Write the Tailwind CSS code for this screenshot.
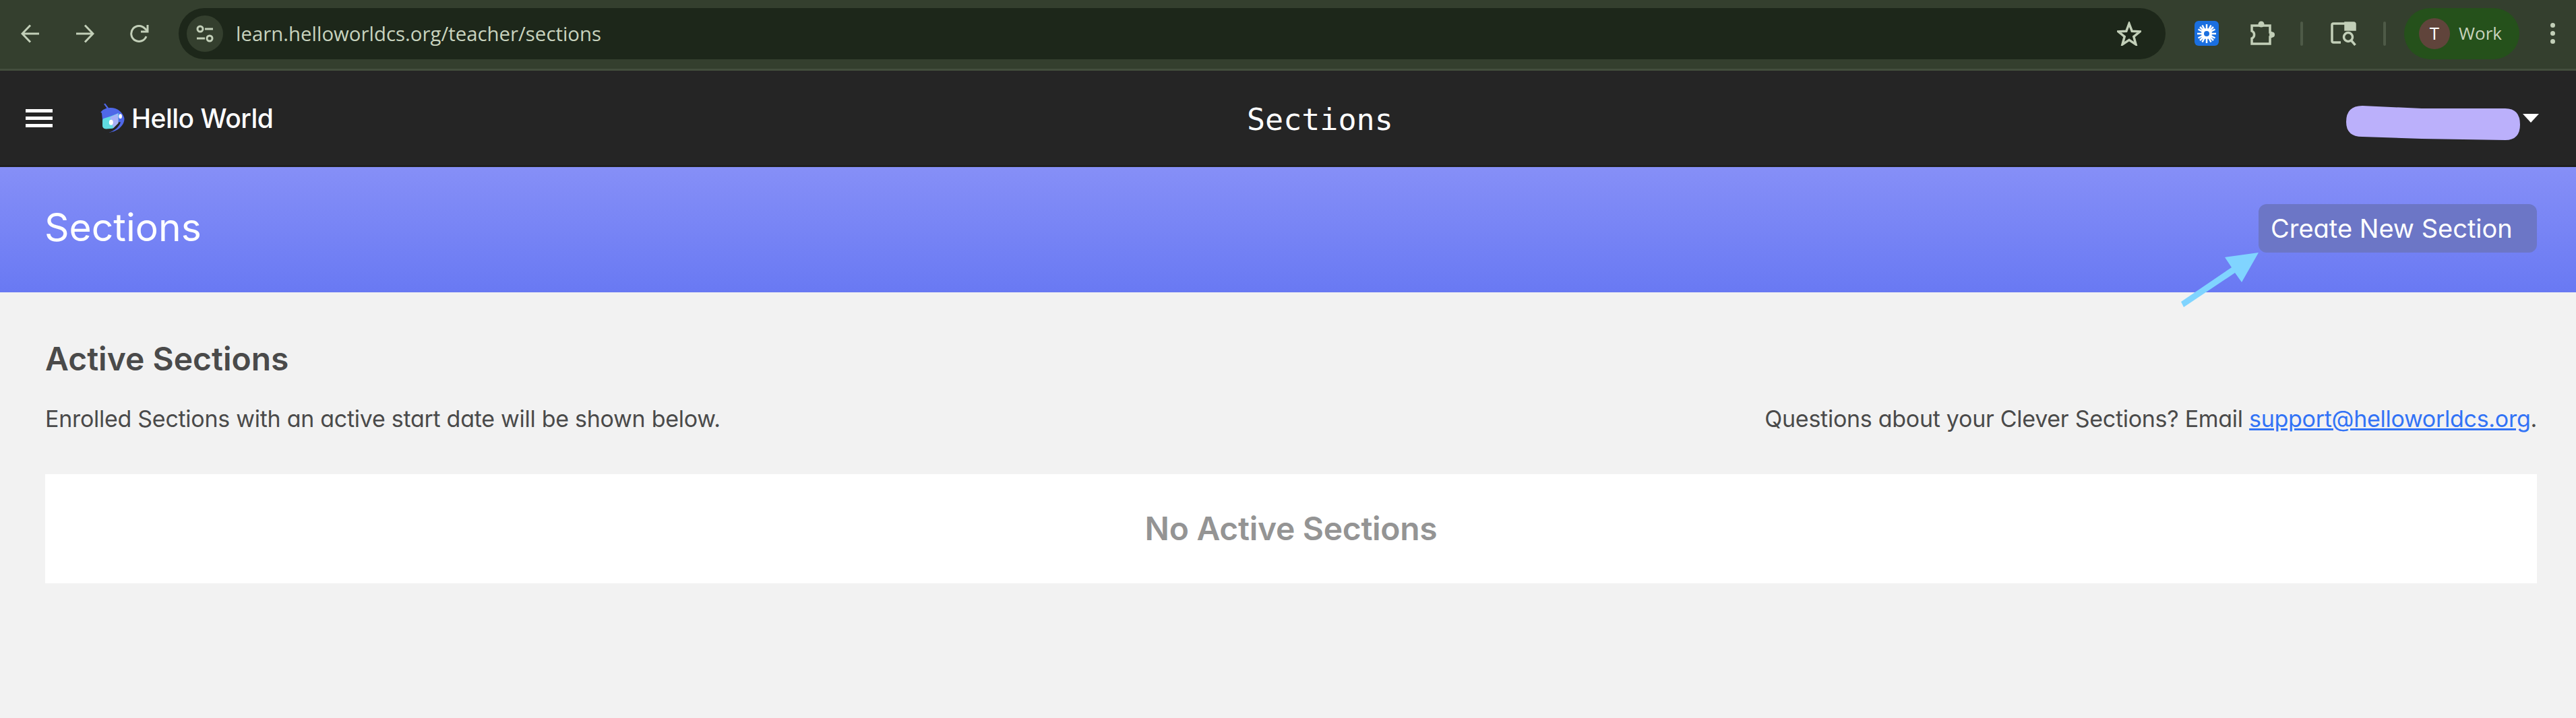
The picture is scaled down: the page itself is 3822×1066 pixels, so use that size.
<!DOCTYPE html>
<html lang="en">
<head>
  <meta charset="UTF-8" />
  <title>Sections</title>
  <script src="https://cdn.jsdelivr.net/npm/@tailwindcss/browser@4"></script>
</head>
<body class="bg-[#f2f2f2] font-['Inter',sans-serif] [font-feature-settings:'cv11'] overflow-hidden">
  <div class="relative w-[3822px] h-[1066px]">

    <!-- browser toolbar -->
    <div class="flex items-center h-[105px] pb-[3px] bg-[#343f2e] border-b-[3px] border-[#434e3d] text-[#c2cfb8]">
      <div class="flex items-center gap-[53px] pl-[31px] w-[265px]">
        <svg class="w-[28px] h-[28px]" viewBox="0 0 28 28" fill="none" stroke="currentColor" stroke-width="3"><path d="M27 14H3M14 1.500 2 14l12 12.500"/></svg>
        <svg class="w-[28px] h-[28px]" viewBox="0 0 28 28" fill="none" stroke="currentColor" stroke-width="3"><path d="M1 14h24M14 1.500 26 14 14 26.500"/></svg>
        <svg class="w-[28px] h-[28px]" viewBox="0 0 28 28" fill="none" stroke="currentColor" stroke-width="3"><path d="M24 18a11.500 11.500 0 1 1-2-11.500L26 10"/><path d="M26 1v10H16" /></svg>
      </div>
      <div class="flex items-center justify-between basis-[2948px] h-[76px] rounded-full bg-[#1d271a] pl-[12px] pr-[36px]">
        <div class="flex items-center gap-[19px]">
          <div class="flex items-center justify-center w-[54px] h-[54px] rounded-full bg-[#343f2e]">
            <svg class="w-[28px] h-[28px]" viewBox="0 0 28 28" fill="none" stroke="currentColor" stroke-width="3"><circle cx="7" cy="7" r="4"/><path d="M14 7h12M2 21h12"/><circle cx="21" cy="21" r="4"/></svg>
          </div>
          <span class="mt-[2px] font-['Open_Sans',sans-serif] text-[29.4px] leading-none text-[#c8d3be] [font-feature-settings:normal]">learn.helloworldcs.org/teacher/sections</span>
        </div>
        <svg class="w-[36px] h-[36px]" viewBox="0 0 36 36" fill="none" stroke="currentColor" stroke-width="3.500"><path d="M18 3l4.200 11.200 12 .6-9.400 7.500 3.200 11.700L18 27.300 8 34l3.200-11.700L1.800 14.800l12-.6z"/></svg>
      </div>
      <div class="flex items-center ml-[43px] h-[76px]">
        <div class="flex items-center justify-center w-[36px] h-[37px] rounded-[6px] bg-[#1a6fe0]">
          <svg class="w-[30px] h-[30px]" viewBox="0 0 30 30" fill="none" stroke="#fff" stroke-width="2.500">
            <path d="M15 1v28M1 15h28M5 5l20 20M25 5 5 25M8.500 2.500l13 25M21.500 2.500l-13 25M2.500 8.500l25 13M27.500 8.500l-25 13"/>
            <circle cx="15" cy="15" r="8" fill="#fff" stroke="none"/>
            <circle cx="15" cy="15" r="4" fill="#1a6fe0" stroke="none"/>
          </svg>
        </div>
        <svg class="ml-[46px] w-[37px] h-[37px]" viewBox="0 0 37 37" fill="none" stroke="currentColor" stroke-width="3.500">
          <path d="M3 7h27v10a3 3 0 0 1 0 7v10H3v-8a6 6 0 0 0 0-11z"/>
          <circle cx="17" cy="5" r="4.500" fill="currentColor" stroke="none"/>
          <circle cx="33" cy="20.500" r="4" fill="currentColor" stroke="none"/>
        </svg>
        <div class="ml-[38px] w-[4px] h-[36px] rounded-full bg-[#4e5a47]"></div>
        <svg class="ml-[41px] w-[40px] h-[36px]" viewBox="0 0 40 36" fill="none" stroke="currentColor" stroke-width="3.500"><path d="M15 31H4a2 2 0 0 1-2-2V5a2 2 0 0 1 2-2h18"/><path d="M22 2h12a2 2 0 0 1 2 2v8H22z" fill="currentColor"/><circle cx="26" cy="23" r="6.500"/><path d="M30.500 28l6 7"/></svg>
        <div class="ml-[38px] w-[4px] h-[36px] rounded-full bg-[#4e5a47]"></div>
        <div class="flex items-center ml-[27px] w-[171px] h-[76px] rounded-full bg-[#25511b] pl-[22px]">
          <div class="flex items-center justify-center w-[46px] h-[46px] rounded-full bg-[#60443b] text-[26px] text-white font-['Open_Sans',sans-serif]">T</div>
          <span class="ml-[13px] text-[26px] font-['Open_Sans',sans-serif] text-[#c8d3be] [font-feature-settings:normal]">Work</span>
        </div>
        <div class="flex flex-col gap-[5px] ml-[46px]">
          <div class="w-[7px] h-[7px] rounded-full bg-current"></div>
          <div class="w-[7px] h-[7px] rounded-full bg-current"></div>
          <div class="w-[7px] h-[7px] rounded-full bg-current"></div>
        </div>
      </div>
    </div>

    <!-- site header -->
    <header class="relative flex items-center justify-between h-[143px] bg-[#252525] border-b-[3px] border-[#1f1f1f] text-white">
      <div class="flex items-center">
        <div class="flex flex-col gap-[6px] ml-[38px] w-[40px]">
          <div class="h-[5px] bg-white"></div>
          <div class="h-[5px] bg-white"></div>
          <div class="h-[5px] bg-white"></div>
        </div>
        <svg class="ml-[71px] w-[36px] h-[44px]" viewBox="88 68 107 130">
          <path d="M88 110c6-10 16-16 28-20L103 72l6-3 15 20c30-5 60 12 69 44 4 28-24 60-68 65 26-9 46-26 52-46l-80-10-3-30c-2-3-4-3-6-2z" fill="#4f68e8"/>
          <path d="M128 128l40-16-2 44-24 24-30 2c-8 0-15-6-15-14v-24c0-4 3-8 7-9z" fill="#5fdce2"/>
          <path d="M130 130l35-16 2 42-22 22z" fill="#a7b1f7"/>
          <ellipse cx="135" cy="153" rx="9" ry="12" fill="#fff"/>
          <ellipse cx="176" cy="126" rx="7" ry="10" fill="#fff"/>
        </svg>
        <span class="ml-[10px] text-[39px] font-medium tracking-[-0.5px] leading-none [font-feature-settings:normal]">Hello World</span>
      </div>
      <div class="absolute left-[1850px] top-[50px] font-['DejaVu_Sans_Mono',monospace] text-[45px] leading-none [font-feature-settings:normal]">Sections</div>
      <div class="flex items-center pr-[55px]">
        <svg class="w-[258px] h-[51px] mt-[15px]" viewBox="0 0 258 51"><path d="M24 0 112 4h124q22 0 22 24 0 23-22 23l-124-2-88-3Q0 46 0 24 0 0 24 0z" fill="#bbb0fb"/></svg>
        <div class="ml-[4px] w-0 h-0 border-x-[12px] border-t-[13px] border-x-transparent border-t-white"></div>
      </div>
    </header>

    <!-- page title band -->
    <section class="flex items-center justify-between h-[186px] px-[58px] pl-[66px] bg-gradient-to-b from-[#868ff7] to-[#6979f3]">
      <h1 class="mb-[8px] text-[57px] text-white leading-none">Sections</h1>
      <button class="flex items-center mb-[4px] h-[72px] w-[413px] pl-[18px] rounded-[12px] bg-[#6c76c6] text-[38px] text-white">Create New Section</button>
    </section>

    <!-- arrow annotation -->
    <svg class="absolute left-[3230px] top-[370px] w-[125px] h-[90px]" viewBox="3230 370 125 90">
      <path d="M3351 375 3301 382 3311 397 3236 448 3240 456 3316 405 3326 419z" fill="#80d4ff"/>
    </svg>

    <main class="px-[58px] pl-[67px]">
      <h2 class="mt-[75px] text-[48px] font-semibold leading-[48px] text-[#4a4a4a]">Active Sections</h2>
      <div class="flex justify-between mt-[43px] text-[34px] tracking-[-0.28px] leading-[44px] text-[#4a4a4a]">
        <p>Enrolled Sections with an active start date will be shown below.</p>
        <p>Questions about your Clever Sections? Email <a href="#" class="text-[#3273f6] underline">support@helloworldcs.org</a>.</p>
      </div>
      <div class="flex items-center justify-center h-[162px] mt-[60px] bg-white text-[48px] font-semibold tracking-[-0.3px] text-[#949494]">No Active Sections</div>
    </main>
  </div>
</body>
</html>
